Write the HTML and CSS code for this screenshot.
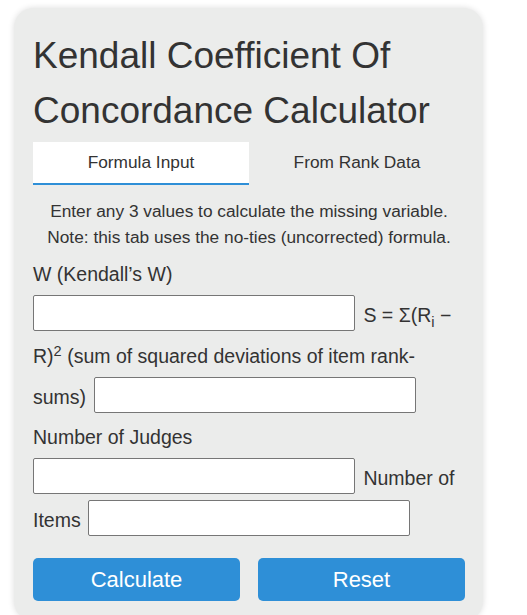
FILE: index.html
```html
<!DOCTYPE html>
<html lang="en">
<head>
    <meta charset="UTF-8">
    <meta name="viewport" content="width=device-width, initial-scale=1.0">
    <title>Kendall Coefficient Of Concordance Calculator</title>
    <link rel="stylesheet" href="styles.css">
</head>
<body>
    <div class="calc-card">
        <h1 class="calc-title">Kendall Coefficient Of Concordance Calculator</h1>

        <div class="calc-tabs">
            <button class="calc-tab active" type="button">Formula Input</button>
            <button class="calc-tab" type="button">From Rank Data</button>
        </div>

        <p class="calc-note">
            Enter any 3 values to calculate the missing variable.<br>
            Note: this tab uses the no-ties (uncorrected) formula.
        </p>

        <form class="calc-form" onsubmit="return false;">
            <label for="w">W (Kendall’s W)</label>
            <input id="w" type="text">
            <label for="s">S = Σ(R<sub>i</sub> − R)<sup>2</sup> (sum of squared deviations of item rank-sums)</label>
            <input id="s" type="text">
            <label for="m">Number of Judges</label>
            <input id="m" type="text">
            <label for="n">Number of Items</label>
            <input id="n" type="text">

            <div class="calc-actions">
                <button class="btn" type="submit">Calculate</button>
                <button class="btn" type="reset">Reset</button>
            </div>
        </form>
    </div>
</body>
</html>
```

FILE: styles.css
```css
* {
    margin: 0;
    padding: 0;
    box-sizing: border-box;
}

body {
    font-family: 'Liberation Sans', Arial, sans-serif;
    color: #333;
    background: #fff;
}

.calc-card {
    width: 469px;
    margin: 8px 0 0 14px;
    padding: 20px 18px 20px 19px;
    background: #ebeceb;
    border-radius: 20px;
    box-shadow: 0 0 6px rgba(0, 0, 0, 0.14);
}

.calc-title {
    font-size: 37px;
    font-weight: normal;
    line-height: 55px;
    color: #333;
}

.calc-tabs {
    display: flex;
    margin-top: 4px;
}

.calc-tab {
    flex: 1;
    height: 43px;
    border: none;
    border-bottom: 2px solid transparent;
    background: transparent;
    font-family: inherit;
    font-size: 17.3px;
    color: #333;
    cursor: pointer;
}

.calc-tab.active {
    background: #fff;
    border-bottom-color: #2e8fd7;
}

.calc-note {
    margin: 13px 0 4px;
    font-size: 17.3px;
    line-height: 26px;
    text-align: center;
}

.calc-form {
    font-size: 19.5px;
    line-height: 40px;
}

.calc-form label {
    margin-right: 2px;
}

.calc-form sub,
.calc-form sup {
    font-size: 0.75em;
    line-height: 0;
}

.calc-form input {
    width: 322px;
    height: 36px;
    padding: 0 8px;
    margin: 1px 3px 4.5px 0;
    border: 1px solid #767676;
    border-radius: 2px;
    background: #fff;
    font-family: inherit;
    font-size: 16px;
    vertical-align: 4px;
}

.calc-actions {
    display: grid;
    grid-template-columns: 1fr 1fr;
    gap: 18px;
    margin-top: 18px;
}

.btn {
    height: 43px;
    border: none;
    border-radius: 5px;
    background: #2e8fd7;
    color: #fff;
    font-family: inherit;
    font-size: 22px;
    cursor: pointer;
}
```
